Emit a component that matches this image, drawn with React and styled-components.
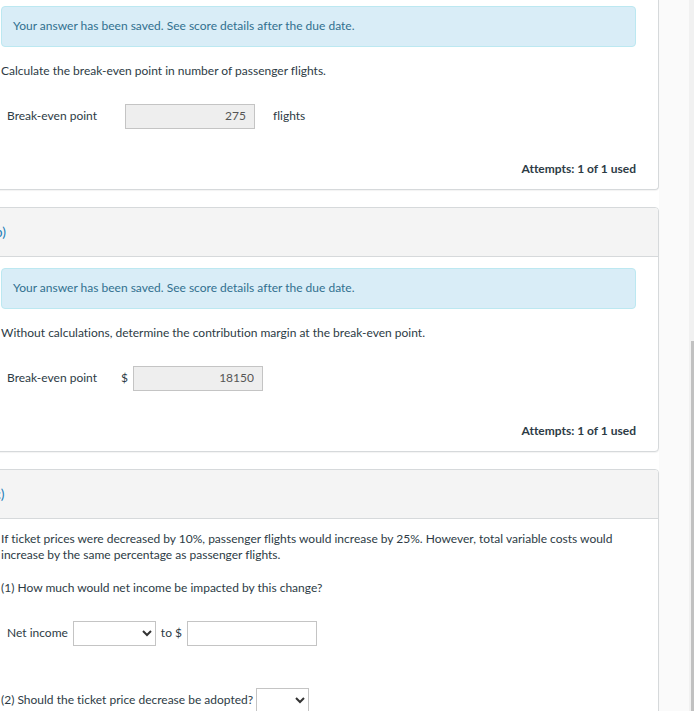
import React from "react";
import styled, { createGlobalStyle } from "styled-components";

const GlobalStyle = createGlobalStyle`
  * {
    box-sizing: border-box;
  }
  body {
    margin: 0;
    background: #fff;
    color: #2d3b45;
    font-family: Lato, "Liberation Sans", sans-serif;
    font-size: 12px;
    line-height: 16px;
    font-variant-ligatures: no-common-ligatures;
  }
`;

function SavedPart({ title, question, id, prefix, value, suffix }) {
  return (
    <Card $open={!title}>
      {title && (
        <CardHeader>
          <h2>{title}</h2>
        </CardHeader>
      )}
      <CardBody $tight={!title}>
        <Notice role="status">
          Your answer has been saved. See score details after the due date.
        </Notice>
        <Question>{question}</Question>
        <AnswerRow>
          <AnswerLabel htmlFor={id} $wide={!prefix}>
            Break-even point
          </AnswerLabel>
          {prefix && <span>{prefix}</span>}
          <AnswerInput id={id} type="text" defaultValue={value} disabled />
          {suffix && <Unit>{suffix}</Unit>}
        </AnswerRow>
        <Attempts>Attempts: 1 of 1 used</Attempts>
      </CardBody>
    </Card>
  );
}

function App() {
  return (
    <Page>
      <GlobalStyle />
      <Content>
        <SavedPart
          id="flights"
          question="Calculate the break-even point in number of passenger flights."
          value="275"
          suffix="flights"
        />
        <SavedPart
          id="margin"
          title="(b)"
          question="Without calculations, determine the contribution margin at the break-even point."
          prefix="$"
          value="18150"
        />
        <Card>
          <CardHeader>
            <h2>(c)</h2>
          </CardHeader>
          <CardBody>
            <Paragraph>
              If ticket prices were decreased by 10%, passenger flights would
              increase by 25%. However, total variable costs would increase by
              the same percentage as passenger flights.
            </Paragraph>
            <Question>
              (1) How much would net income be impacted by this change?
            </Question>
            <AnswerRow>
              <label htmlFor="direction">Net income</label>
              <Select id="direction" $width="83px" />
              <label htmlFor="amount">to $</label>
              <AnswerInput id="amount" type="text" />
            </AnswerRow>
            <DecisionRow>
              <label htmlFor="decision">
                (2) Should the ticket price decrease be adopted?
              </label>
              <Select id="decision" $width="53px" />
            </DecisionRow>
          </CardBody>
        </Card>
      </Content>
      <Scrollbar>
        <div className="thumb" />
      </Scrollbar>
    </Page>
  );
}

const Page = styled.div`
  display: flex;
  height: 100vh;
  overflow: hidden;
  background: #fafafa;
`;

/* the column is scrolled a little past its left edge */
const Content = styled.main`
  flex: 1;
  display: flex;
  flex-direction: column;
  gap: 17px;
  margin-left: -24px;
  margin-right: 30px;
  background: #fff;
`;

const Card = styled.section`
  flex-shrink: 0;
  background: #fff;
  border: 1px solid #d6d9db;
  border-top-width: ${(props) => (props.$open ? "0" : "1px")};
  border-radius: ${(props) => (props.$open ? "0 0 4px 4px" : "4px")};
  box-shadow: 0 1px 1px rgba(0, 0, 0, 0.05);
`;

const CardHeader = styled.header`
  padding: 16px 14px;
  background: #f4f4f4;
  border-bottom: 1px solid #d6d9db;
  border-radius: 3px 3px 0 0;
  h2 {
    margin: 0;
    color: #1f7fb8;
    font-size: 14px;
    font-weight: 400;
    line-height: 16px;
  }
`;

const CardBody = styled.div`
  padding: ${(props) => (props.$tight ? "6px" : "11px")} 22px 12px 24px;
`;

const Notice = styled.div`
  padding: 11px 11px 12px;
  color: #31708f;
  background: #d9edf7;
  border: 1px solid #bce8f1;
  border-radius: 4px;
`;

const Paragraph = styled.p`
  margin: 0;
  padding: 1px 0;
`;

const Question = styled.p`
  margin: 16px 0 0;
`;

const AnswerRow = styled.div`
  display: flex;
  align-items: center;
  gap: 5px;
  margin-top: 25px;
  padding-left: 6px;
  label,
  span {
    padding-bottom: 2px;
  }
`;

const AnswerLabel = styled.label`
  width: ${(props) => (props.$wide ? "113px" : "109px")};
`;

const Unit = styled.span`
  margin-left: 13px;
`;

const AnswerInput = styled.input`
  width: 130px;
  height: 25px;
  padding: 0 8px 2px;
  font: inherit;
  text-align: right;
  color: #555;
  background: #fff;
  border: 1px solid #c4c4c4;
  border-radius: 0;
  &:disabled {
    background: #eee;
  }
`;

const Select = styled.select`
  width: ${(props) => props.$width};
  height: 25px;
  font: inherit;
  color: #333;
  background: #fff;
  border: 1px solid #c4c4c4;
  border-radius: 0;
`;

const DecisionRow = styled.div`
  display: flex;
  align-items: center;
  gap: 3px;
  margin-top: 42px;
  label {
    padding-bottom: 2px;
  }
`;

const Attempts = styled.p`
  margin: 32px 0 0;
  text-align: right;
  font-weight: 700;
`;

const Scrollbar = styled.div`
  display: flex;
  flex-direction: column;
  justify-content: flex-end;
  width: 5px;
  padding-left: 2px;
  background: #f1f1f1;
  .thumb {
    height: 52%;
    background: #c1c1c1;
  }
`;

export default App;
